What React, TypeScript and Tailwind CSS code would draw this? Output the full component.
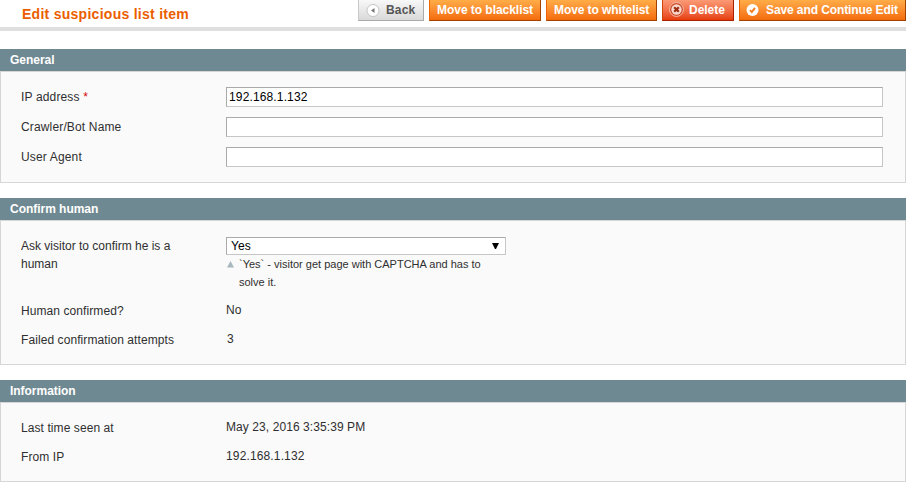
import type { ReactNode } from 'react';

function Button({ tone, children }: { tone: string; children: ReactNode }) {
  return (
    <button className={`flex h-[21px] shrink-0 items-center border border-t-0 pb-px text-[12px] leading-[18px] font-bold whitespace-nowrap ${tone}`}>
      {children}
    </button>
  );
}

const orange =
  'border-[#ed6502] border-r-[#a04300] border-b-[#a04300] bg-linear-to-b from-[#ffac47] to-[#f46b06] text-white';

function Section({ title, body, children }: { title: string; body: string; children: ReactNode }) {
  return (
    <section>
      <h4 className="h-[22px] bg-[#6f8992] pl-[10px] text-[12px] leading-[22px] font-bold tracking-[-0.03px] text-white">{title}</h4>
      <div className={`border border-[#d6d6d6] bg-[#fafafa] pl-5 ${body}`}>{children}</div>
    </section>
  );
}

function Row({ label, row, children }: { label: ReactNode; row: string; children?: ReactNode }) {
  return (
    <div className={`flex items-start ${row}`}>
      <div className="w-[205px] shrink-0 pt-px pr-10 text-[12px] leading-[18px]">{label}</div>
      {children}
    </div>
  );
}

function Field({ label, value = '' }: { label: ReactNode; value?: string }) {
  return (
    <Row label={label} row="h-[30px] tracking-[0.15px]">
      <input
        className="h-5 w-[657px] border border-[#aaa] border-r-[#c6c6c6] border-b-[#c6c6c6] bg-white px-[2px] text-[12px] tracking-[0.14px] text-black outline-none"
        defaultValue={value}
      />
    </Row>
  );
}

export default function App() {
  return (
    <main className="h-[482px] w-[906px] overflow-hidden bg-white font-['Liberation_Sans',Arial,sans-serif] text-[12px] tracking-[0.08px] text-[#2f2f2f]">
      <header className="flex h-[31px] items-start justify-between border-b-4 border-[#dfdfdf] pl-[22px]">
        <h3 className="pt-[5px] text-[14px] leading-[18px] font-bold tracking-[0.27px] text-[#eb5e00]">Edit suspicious list item</h3>
        <div className="flex gap-[5px]">
          <Button tone="w-[66px] pl-[7px] gap-[6px] border-[#c8c8c8] border-r-[#aaa] border-b-[#aaa] bg-linear-to-b from-[#f8f8f8] to-[#d9d9d9] text-[#555]">
            <svg className="size-[14px]" viewBox="0 0 14 14">
              <circle cx="7" cy="7.5" r="6" fill="#fff" stroke="#c4c4c4" />
              <path d="M8.5 5v5L5 7.5z" fill="#777" />
            </svg>
            <span className="tracking-[0.15px]">Back</span>
          </Button>
          <Button tone={`w-[112px] pl-[7px] tracking-[-0.04px] ${orange}`}>Move to blacklist</Button>
          <Button tone={`w-[111px] pl-[7px] tracking-[-0.09px] ${orange}`}>Move to whitelist</Button>
          <Button tone="w-[72px] pl-[6px] gap-[5px] border-[#d24403] border-r-[#a92000] border-b-[#a92000] bg-linear-to-b from-[#fb9a75] to-[#e63c05] text-white">
            <svg className="size-[15px]" viewBox="0 0 15 15">
              <circle cx="7.5" cy="7.5" r="6.9" fill="#c9431f" stroke="#f7c4b2" strokeWidth="1" />
              <circle cx="7.5" cy="7.5" r="5.2" fill="#f9d9ce" />
              <path d="m5.2 5.2 4.6 4.6m0-4.6L5.2 9.8" stroke="#9d2c10" strokeWidth="2.2" />
            </svg>
            <span className="tracking-[-0.04px]">Delete</span>
          </Button>
          <Button tone={`w-[167px] pl-[6px] gap-[7px] ${orange}`}>
            <svg className="size-[13px]" viewBox="0 0 13 13">
              <circle cx="6.5" cy="7" r="6" fill="#fff" />
              <path d="m4 7.1 1.8 1.8L9 5" fill="none" stroke="#f58220" strokeWidth="2" />
            </svg>
            <span className="tracking-[-0.1px]">Save and Continue Edit</span>
          </Button>
        </div>
      </header>

      <div className="flex flex-col gap-[15px] pt-[18px]">
        <Section title="General" body="h-[112px] pt-[15px]">
          <Field label={<>IP address <span className="text-[#d40707]">*</span></>} value="192.168.1.132" />
          <Field label="Crawler/Bot Name" />
          <Field label="User Agent" />
        </Section>

        <Section title="Confirm human" body="h-[145px] pt-[16px]">
          <Row label={<div className="-mt-px tracking-normal">Ask visitor to confirm he is a human</div>} row="h-[64px]">
            <div>
              <div className="flex h-[18px] w-[280px] items-center justify-between border border-[#aaa] border-r-[#c6c6c6] border-b-[#c6c6c6] bg-white pr-[6px] pl-[4px] text-black">
                <span className="leading-4">Yes</span>
                <svg className="h-[6px] w-[7px]" viewBox="0 0 7 6">
                  <path d="M0 0h7L4 6H3z" fill="#000" />
                </svg>
              </div>
              <div className="flex w-[280px] gap-[5px] pl-[1px]">
                <svg className="mt-[6px] h-[7px] w-[7px] shrink-0" viewBox="0 0 7 7">
                  <path d="M3.5 0 7 6.5H0z" fill="#a6b8bd" />
                </svg>
                <p className="w-[250px] text-[11px] leading-[18px] tracking-normal">`Yes` - visitor get page with CAPTCHA and has to solve it.</p>
              </div>
            </div>
          </Row>
          <Row label="Human confirmed?" row="h-[29px]">
            <span className="leading-[18px]">No</span>
          </Row>
          <Row label="Failed confirmation attempts" row="h-[29px]">
            <span className="pl-px leading-[18px]">3</span>
          </Row>
        </Section>

        <Section title="Information" body="h-[80px] pt-[15px]">
          <Row label="Last time seen at" row="h-[29px]">
            <span className="leading-[18px]">May 23, 2016 3:35:39 PM</span>
          </Row>
          <Row label="From IP" row="h-[29px]">
            <span className="leading-[18px] tracking-[0.14px]">192.168.1.132</span>
          </Row>
        </Section>
      </div>
    </main>
  );
}
